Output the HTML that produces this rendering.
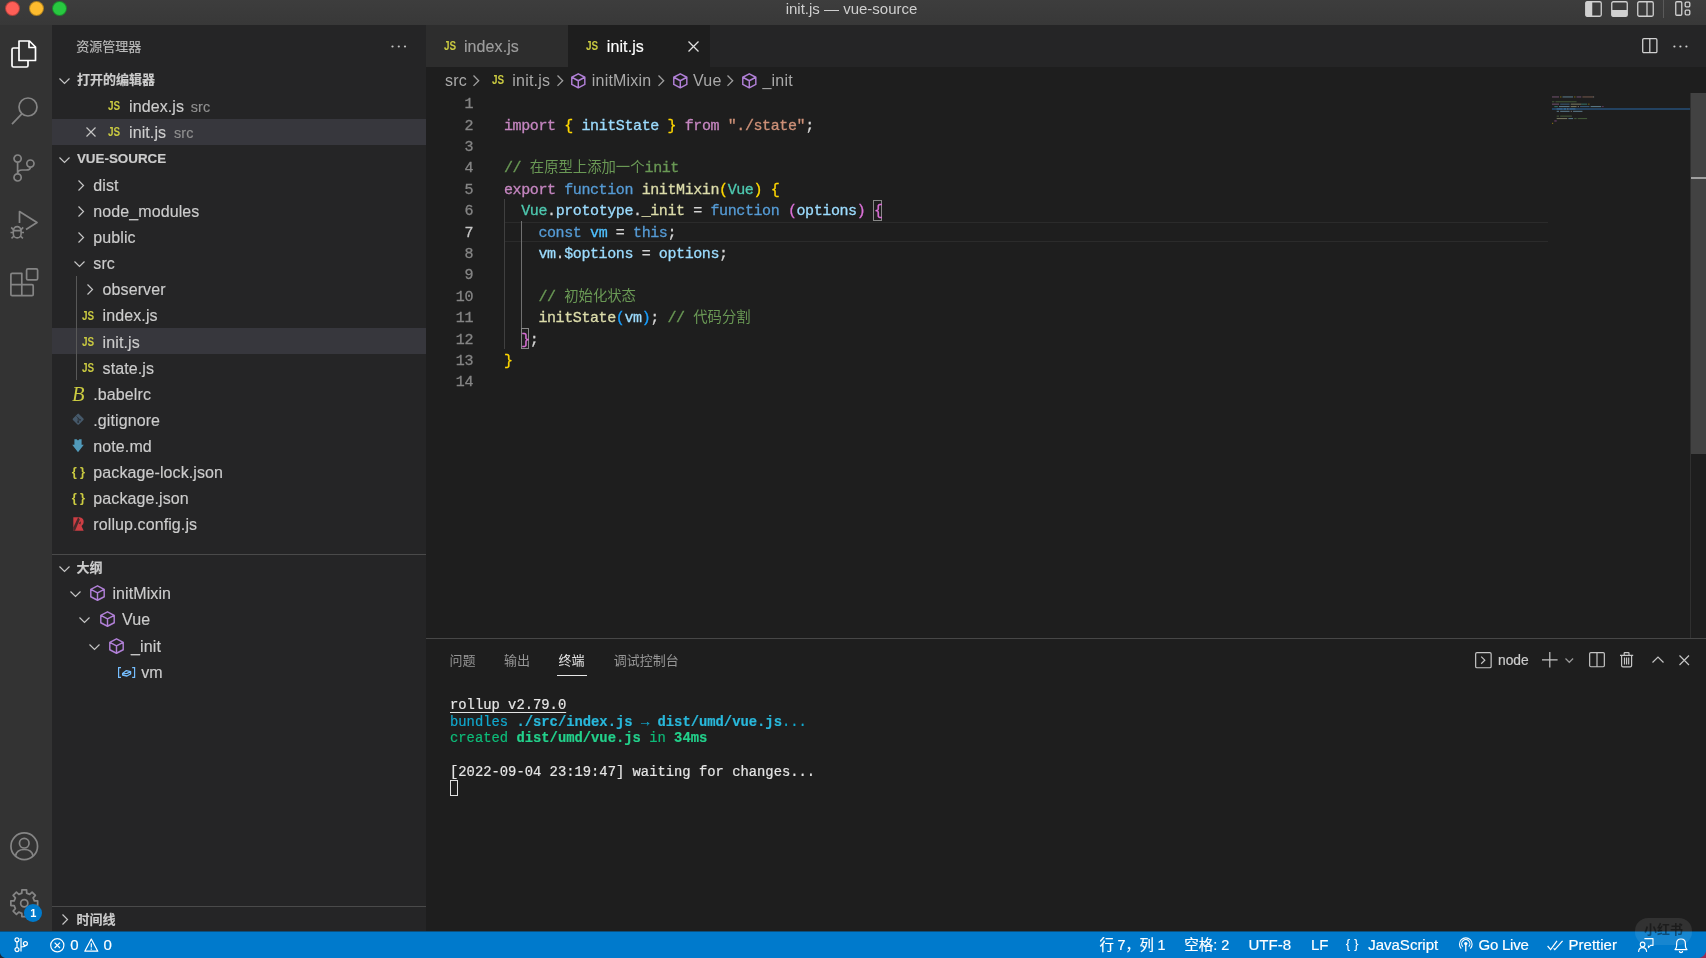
<!DOCTYPE html>
<html lang="zh-CN">
<head>
<meta charset="utf-8">
<title>init.js — vue-source</title>
<style>
*{box-sizing:border-box;margin:0;padding:0}
html,body{width:1706px;height:958px;overflow:hidden;background:#1e1e1e}
body{font-family:"Liberation Sans","Noto Sans CJK SC",sans-serif;color:#cccccc;font-size:16px;position:relative}
div,span{position:absolute;white-space:pre}
svg{position:absolute;overflow:visible}
#titlebar{left:0;top:0;width:1706px;height:25px;background:linear-gradient(#3d3d3d,#383838)}
#title{left:-1.5px;width:1706px;top:-1.2px;height:19px;line-height:19px;text-align:center;font-size:15px;color:#cfcfcf}
.tl{top:1px;width:15px;height:15px;border-radius:50%;border:0.6px solid rgba(0,0,0,0.3)}
#activity{left:0;top:25px;width:52px;height:907px;background:#333333}
#sidebar{left:52px;top:25px;width:374px;height:907px;background:#252526}
#titlebar,#activity,#sidebar,#editor,#status{will-change:transform}
#editor{left:426px;top:25px;width:1280px;height:907px;background:#1e1e1e}
#status{left:0;top:931px;width:1706px;height:27px;border-top:1px solid #0c4f7d;background-clip:border-box;background:#007acc;color:#fff;font-size:15px}
.row{left:0;width:374px;height:26px}
.sel{background:#37373d}
.t{height:26px;line-height:26px;color:#cccccc;font-size:16px;letter-spacing:0.1px;-webkit-text-stroke:0.15px currentColor}
.hdr{font-weight:bold;font-size:13px;color:#cccccc;letter-spacing:0}
.dim{color:#909090;font-size:14.4px}
.js{color:#cbcb41;font-weight:bold;font-size:13.4px;letter-spacing:0;height:26px;line-height:26px;transform:scaleX(0.74);transform-origin:0 50%}
.code{left:0;width:1280px;height:21.4px;line-height:21.4px;font-family:"Liberation Mono","Noto Sans CJK SC",monospace;font-size:15px;letter-spacing:-0.4px;color:#d4d4d4;-webkit-text-stroke:0.3px currentColor}
.code u{text-decoration:none;font-size:14.35px;letter-spacing:0;-webkit-text-stroke:0}
.ln{left:0;width:47px;text-align:right;color:#858585;height:21.4px;line-height:21.4px}
.ct{left:78px;height:21.4px;line-height:21.4px}
.code i,.term i,.term b{font-style:normal;position:static}
.k{color:#c586c0}.b{color:#569cd6}.v{color:#9cdcfe}.f{color:#dcdcaa}.s{color:#ce9178}.c{color:#6a9955}.ty{color:#4ec9b0}
.g{color:#ffd700}.p{color:#da70d6}.bl{color:#179fff}
.term{left:24px;font-family:"Liberation Mono","Noto Sans CJK SC",monospace;font-size:13.83px;line-height:17px;height:17px;color:#cccccc;-webkit-text-stroke:0.2px currentColor}
.st{top:0px;height:26px;line-height:26px;color:#fff;-webkit-text-stroke:0.18px #fff}
.ptab{font-size:13px;height:20px;line-height:20px;color:#969696}
.bc{height:26px;line-height:26px;font-size:16px;color:#a9a9a9;top:43px;letter-spacing:0.2px}
</style>
</head>
<body>
<div id="titlebar">
<div class="tl" style="left:4.7px;background:#fe5f57"></div>
<div class="tl" style="left:28.5px;background:#febc2e"></div>
<div class="tl" style="left:52.1px;background:#28c840"></div>
<div id="title">init.js — vue-source</div>
<svg style="left:1584.5px;top:0.5px" width="17" height="16" viewBox="0 0 17 16"><rect x="0.75" y="0.75" width="15.5" height="14.5" rx="1.5" fill="none" stroke="#d0d0d0" stroke-width="1.3"/><rect x="0.75" y="0.75" width="6.5" height="14.5" fill="#d0d0d0"/></svg>
<svg style="left:1610.6px;top:0.5px" width="17" height="16" viewBox="0 0 17 16"><rect x="0.75" y="0.75" width="15.5" height="14.5" rx="1.5" fill="none" stroke="#d0d0d0" stroke-width="1.3"/><rect x="0.75" y="9" width="15.5" height="6.3" fill="#d0d0d0"/></svg>
<svg style="left:1636.6px;top:0.5px" width="17" height="16" viewBox="0 0 17 16"><rect x="0.75" y="0.75" width="15.5" height="14.5" rx="1.5" fill="none" stroke="#d0d0d0" stroke-width="1.3"/><path d="M10 0.75 V15.25" stroke="#d0d0d0" stroke-width="1.3"/></svg>
<div style="left:1663px;top:0;width:1px;height:18px;background:#5a5a5a"></div>
<svg style="left:1674.7px;top:1px" width="16" height="15" viewBox="0 0 16 15"><rect x="0.75" y="0.75" width="6" height="13.5" rx="1" fill="none" stroke="#d0d0d0" stroke-width="1.3"/><rect x="10.2" y="1.2" width="4.6" height="4.6" rx="1" fill="none" stroke="#d0d0d0" stroke-width="1.3"/><rect x="10.2" y="9.2" width="4.6" height="4.6" rx="1" fill="none" stroke="#d0d0d0" stroke-width="1.3"/></svg>
</div>
<div id="activity">
<svg style="left:10.6px;top:14.6px" width="25.5" height="28" viewBox="0 0 25.5 28"><path d="M8 1 H18.5 L24.5 7 V20.5 H8 Z M18 1 V7.5 H24.5" fill="none" stroke="#ffffff" stroke-width="1.7" stroke-linejoin="round"/><path d="M8 8 H2.5 Q1 8 1 9.5 V25.5 Q1 27 2.5 27 H15.5 Q17 27 17 25.5 V20.5" fill="none" stroke="#ffffff" stroke-width="1.7" stroke-linejoin="round"/></svg>
<svg style="left:11px;top:71.5px" width="27" height="28" viewBox="0 0 27 28"><circle cx="17" cy="10" r="9" fill="none" stroke="#858585" stroke-width="1.7"/><path d="M10.8 16.8 L1 27.2" stroke="#858585" stroke-width="1.7"/></svg>
<svg style="left:12.6px;top:128.8px" width="22" height="28" viewBox="0 0 22 28"><circle cx="4.6" cy="4.6" r="3.6" fill="none" stroke="#858585" stroke-width="1.7"/><circle cx="4.6" cy="23.4" r="3.6" fill="none" stroke="#858585" stroke-width="1.7"/><circle cx="17.4" cy="9.6" r="3.6" fill="none" stroke="#858585" stroke-width="1.7"/><path d="M4.6 8.2 V19.8 M4.6 19.8 Q4.6 16 9 16 H13 Q17.4 16 17.4 13.2" fill="none" stroke="#858585" stroke-width="1.7"/></svg>
<svg style="left:9.6px;top:185px" width="28.5" height="29" viewBox="0 0 28.5 29"><path d="M9.5 13 V1.5 L27 12.5 L16 19.5" fill="none" stroke="#858585" stroke-width="1.7" stroke-linejoin="round"/><path d="M3.6 20.2 a3.6 3.6 0 0 1 7.2 0 M3.3 20.6 H11.1 V24 a3.9 3.9 0 0 1 -7.8 0 Z M3.3 22.5 H0.5 M11.1 22.5 H14 M3.3 19.6 L1.2 17.4 M11.1 19.6 L13.2 17.4 M4 26 L1.5 28.3 M10.4 26 L12.9 28.3" fill="none" stroke="#858585" stroke-width="1.6"/></svg>
<svg style="left:9.6px;top:242.7px" width="28.5" height="28.5" viewBox="0 0 28.5 28.5"><path d="M0.9 6.6 Q0.9 5.4 2.1 5.4 H11.8 V16.7 H22 Q23.2 16.7 23.2 17.9 V26.4 Q23.2 27.6 22 27.6 H2.1 Q0.9 27.6 0.9 26.4 Z M0.9 16.7 H11.8 V27.6" fill="none" stroke="#858585" stroke-width="1.7" stroke-linejoin="round"/><rect x="16.6" y="0.9" width="11" height="11" rx="1.4" fill="none" stroke="#858585" stroke-width="1.7"/></svg>
<svg style="left:9.6px;top:807.2px" width="28.5" height="28.5" viewBox="0 0 28.5 28.5"><circle cx="14.25" cy="14.25" r="13.3" fill="none" stroke="#858585" stroke-width="1.7"/><circle cx="14.25" cy="11.2" r="4.8" fill="none" stroke="#858585" stroke-width="1.7"/><path d="M5.5 24 Q6.5 17.5 14.25 17.5 Q22 17.5 23 24" fill="none" stroke="#858585" stroke-width="1.7"/></svg>
<svg style="left:9.6px;top:863.9px" width="28.5" height="28.5" viewBox="0 0 28.5 28.5"><path d="M27.65 11.91 L27.65 16.59 L24.36 16.68 L23.12 19.68 L25.38 22.07 L22.07 25.38 L19.68 23.12 L16.68 24.36 L16.59 27.65 L11.91 27.65 L11.82 24.36 L8.82 23.12 L6.43 25.38 L3.12 22.07 L5.38 19.68 L4.14 16.68 L0.85 16.59 L0.85 11.91 L4.14 11.82 L5.38 8.82 L3.12 6.43 L6.43 3.12 L8.82 5.38 L11.82 4.14 L11.91 0.85 L16.59 0.85 L16.68 4.14 L19.68 5.38 L22.07 3.12 L25.38 6.43 L23.12 8.82 L24.36 11.82 Z" fill="none" stroke="#858585" stroke-width="1.7" stroke-linejoin="round"/><circle cx="14.25" cy="14.25" r="3.6" fill="none" stroke="#858585" stroke-width="1.7"/></svg>
<div style="left:24.3px;top:878.8px;width:18px;height:18px;border-radius:9px;background:#007acc;color:#fff;font-size:11px;font-weight:bold;line-height:18px;text-align:center">1</div>
</div>
<div id="sidebar">
<span class="t" style="left:24.3px;top:8.7px;height:26px;line-height:26px;font-size:13px;color:#bbbbbb;letter-spacing:0">资源管理器</span>
<svg style="left:339px;top:20px" width="16" height="3" viewBox="0 0 16 3"><circle cx="1.5" cy="1.5" r="1.1" fill="#c5c5c5"/><circle cx="7.8" cy="1.5" r="1.1" fill="#c5c5c5"/><circle cx="14" cy="1.5" r="1.1" fill="#c5c5c5"/></svg>
<svg style="left:6.7px;top:52.8px" width="11" height="6.5" viewBox="0 0 11 6.5"><path d="M0.5 0.5 L5.5 5.5 L10.5 0.5" fill="none" stroke="#c5c5c5" stroke-width="1.2"/></svg>
<span class="t hdr" style="left:24.9px;top:42.4px;height:26px;line-height:26px;">打开的编辑器</span>
<span class="js" style="left:56.0px;top:68.0px">JS</span>
<span class="t" style="left:77.0px;top:68.9px;height:26px;line-height:26px;">index.js</span>
<span class="t dim" style="left:138.8px;top:69.2px;height:26px;line-height:26px;">src</span>
<div class="row sel" style="top:94.3px;height:26.2px"></div>
<svg style="left:33.5px;top:102.3px" width="10" height="10" viewBox="0 0 10 10"><path d="M0.5 0.5 L9.5 9.5 M9.5 0.5 L0.5 9.5" fill="none" stroke="#c5c5c5" stroke-width="1.2"/></svg>
<span class="js" style="left:56.0px;top:94.0px">JS</span>
<span class="t" style="left:77.0px;top:94.9px;height:26px;line-height:26px;">init.js</span>
<span class="t dim" style="left:122.0px;top:95.2px;height:26px;line-height:26px;">src</span>
<svg style="left:6.7px;top:131.7px" width="11" height="6.5" viewBox="0 0 11 6.5"><path d="M0.5 0.5 L5.5 5.5 L10.5 0.5" fill="none" stroke="#c5c5c5" stroke-width="1.2"/></svg>
<span class="t hdr" style="left:24.9px;top:121.2px;height:26px;line-height:26px;font-size:13.4px">VUE-SOURCE</span>
<div class="row sel" style="top:303.2px;height:25.8px"></div>
<div style="left:24.400000000000006px;top:251px;width:1px;height:104px;background:#585858"></div>
<svg style="left:25.8px;top:154.5px" width="6.5" height="11" viewBox="0 0 6.5 11"><path d="M0.5 0.5 L5.5 5.5 L0.5 10.5" fill="none" stroke="#c5c5c5" stroke-width="1.2"/></svg>
<span class="t" style="left:41.3px;top:147.9px;height:26px;line-height:26px;">dist</span>
<svg style="left:25.8px;top:180.5px" width="6.5" height="11" viewBox="0 0 6.5 11"><path d="M0.5 0.5 L5.5 5.5 L0.5 10.5" fill="none" stroke="#c5c5c5" stroke-width="1.2"/></svg>
<span class="t" style="left:41.3px;top:173.9px;height:26px;line-height:26px;">node_modules</span>
<svg style="left:25.8px;top:206.5px" width="6.5" height="11" viewBox="0 0 6.5 11"><path d="M0.5 0.5 L5.5 5.5 L0.5 10.5" fill="none" stroke="#c5c5c5" stroke-width="1.2"/></svg>
<span class="t" style="left:41.3px;top:199.9px;height:26px;line-height:26px;">public</span>
<svg style="left:22.3px;top:236.1px" width="11" height="6.5" viewBox="0 0 11 6.5"><path d="M0.5 0.5 L5.5 5.5 L10.5 0.5" fill="none" stroke="#c5c5c5" stroke-width="1.2"/></svg>
<span class="t" style="left:41.3px;top:226.1px;height:26px;line-height:26px;">src</span>
<svg style="left:35.2px;top:258.9px" width="6.5" height="11" viewBox="0 0 6.5 11"><path d="M0.5 0.5 L5.5 5.5 L0.5 10.5" fill="none" stroke="#c5c5c5" stroke-width="1.2"/></svg>
<span class="t" style="left:50.6px;top:252.3px;height:26px;line-height:26px;">observer</span>
<span class="js" style="left:30.0px;top:277.5px">JS</span>
<span class="t" style="left:50.6px;top:278.4px;height:26px;line-height:26px;">index.js</span>
<span class="js" style="left:30.0px;top:303.6px">JS</span>
<span class="t" style="left:50.6px;top:304.5px;height:26px;line-height:26px;">init.js</span>
<span class="js" style="left:30.0px;top:329.7px">JS</span>
<span class="t" style="left:50.6px;top:330.6px;height:26px;line-height:26px;">state.js</span>
<span style="left:17.299999999999997px;top:355.6px;width:18px;height:26px;line-height:26px;text-align:center;font-family:'Liberation Serif',serif;font-style:italic;font-size:20.5px;color:#cbcb41">B</span>
<span class="t" style="left:41.3px;top:356.7px;height:26px;line-height:26px;">.babelrc</span>
<svg style="left:19.899999999999995px;top:388.3px" width="12.4" height="12.4" viewBox="0 0 12.4 12.4"><rect x="2" y="2" width="8.4" height="8.4" rx="1" transform="rotate(45 6.2 6.2)" fill="#46596a"/><path d="M4.6 3.4 L8 6.8 M6.2 5 V9" stroke="#2a3138" stroke-width="1" fill="none"/><circle cx="6.2" cy="9" r="0.9" fill="#2a3138"/><circle cx="8" cy="6.8" r="0.9" fill="#2a3138"/></svg>
<span class="t" style="left:41.3px;top:382.9px;height:26px;line-height:26px;">.gitignore</span>
<svg style="left:20.200000000000003px;top:413.90000000000003px" width="12" height="13.4" viewBox="0 0 12 13.4"><path d="M2.4 0.3 H4.6 L6 1.4 L7.4 0.3 H9.6 V5.8 H11.8 L6 13.2 L0.2 5.8 H2.4 Z" fill="#519aba"/></svg>
<span class="t" style="left:41.3px;top:408.9px;height:26px;line-height:26px;">note.md</span>
<span style="left:18.1px;top:433.8px;width:20px;height:26px;line-height:26px;text-align:center;font-weight:bold;font-size:13px;color:#cbcb41;letter-spacing:3.2px">{}</span>
<span class="t" style="left:41.3px;top:435.1px;height:26px;line-height:26px;">package-lock.json</span>
<span style="left:18.1px;top:459.90000000000003px;width:20px;height:26px;line-height:26px;text-align:center;font-weight:bold;font-size:13px;color:#cbcb41;letter-spacing:3.2px">{}</span>
<span class="t" style="left:41.3px;top:461.2px;height:26px;line-height:26px;">package.json</span>
<svg style="left:20.799999999999997px;top:492.19999999999993px" width="11" height="14" viewBox="0 0 11 14"><path d="M0.3 0.3 H6.5 Q10.7 0.8 10.7 5 Q10.7 7.5 8.5 9 L10.7 13.7 H0.3 Z" fill="#cc3e44"/><path d="M5.2 0.3 L6.8 2.6 L2 13.7 H0.3 V10.5 Z" fill="#252526" opacity="0.8"/><path d="M5.6 6.2 L8 4.2 L7.4 7.6 Z" fill="#252526" opacity="0.8"/></svg>
<span class="t" style="left:41.3px;top:487.3px;height:26px;line-height:26px;">rollup.config.js</span>
<div style="left:0;top:529.2px;width:374px;height:1px;background:#4a4a4a"></div>
<svg style="left:6.7px;top:540.6px" width="11" height="6.5" viewBox="0 0 11 6.5"><path d="M0.5 0.5 L5.5 5.5 L10.5 0.5" fill="none" stroke="#c5c5c5" stroke-width="1.2"/></svg>
<span class="t hdr" style="left:24.4px;top:530.0px;height:26px;line-height:26px;">大纲</span>
<svg style="left:17.7px;top:566.2px" width="11" height="6.5" viewBox="0 0 11 6.5"><path d="M0.5 0.5 L5.5 5.5 L10.5 0.5" fill="none" stroke="#c5c5c5" stroke-width="1.2"/></svg>
<svg style="left:38.1px;top:560.3px" width="15.0" height="16.1" viewBox="0 0 15 16"><path d="M7.5 0.8 L14.2 4.3 V11.7 L7.5 15.2 L0.8 11.7 V4.3 Z M0.8 4.3 L7.5 7.9 L14.2 4.3 M7.5 7.9 V15.2" fill="none" stroke="#b180d7" stroke-width="1.45" stroke-linejoin="round"/></svg>
<span class="t" style="left:60.4px;top:556.3px;height:26px;line-height:26px;">initMixin</span>
<svg style="left:27.1px;top:592.2px" width="11" height="6.5" viewBox="0 0 11 6.5"><path d="M0.5 0.5 L5.5 5.5 L10.5 0.5" fill="none" stroke="#c5c5c5" stroke-width="1.2"/></svg>
<svg style="left:47.9px;top:586.3px" width="15.0" height="16.1" viewBox="0 0 15 16"><path d="M7.5 0.8 L14.2 4.3 V11.7 L7.5 15.2 L0.8 11.7 V4.3 Z M0.8 4.3 L7.5 7.9 L14.2 4.3 M7.5 7.9 V15.2" fill="none" stroke="#b180d7" stroke-width="1.45" stroke-linejoin="round"/></svg>
<span class="t" style="left:70.0px;top:582.3px;height:26px;line-height:26px;">Vue</span>
<svg style="left:36.6px;top:618.5px" width="11" height="6.5" viewBox="0 0 11 6.5"><path d="M0.5 0.5 L5.5 5.5 L10.5 0.5" fill="none" stroke="#c5c5c5" stroke-width="1.2"/></svg>
<svg style="left:57.3px;top:612.5px" width="15.0" height="16.1" viewBox="0 0 15 16"><path d="M7.5 0.8 L14.2 4.3 V11.7 L7.5 15.2 L0.8 11.7 V4.3 Z M0.8 4.3 L7.5 7.9 L14.2 4.3 M7.5 7.9 V15.2" fill="none" stroke="#b180d7" stroke-width="1.45" stroke-linejoin="round"/></svg>
<span class="t" style="left:79.1px;top:608.5px;height:26px;line-height:26px;">_init</span>
<svg style="left:65.7px;top:641.6px" width="17.2" height="11" viewBox="0 0 17.2 11"><path d="M3 0.6 H0.6 V10.4 H3 M14.2 0.6 H16.6 V10.4 H14.2" fill="none" stroke="#75beff" stroke-width="1.2"/><path d="M4.6 6.4 L8.4 3.6 L12.6 4.6 V7 L9 9 L4.6 8 Z M4.8 6.6 L9 6.4 L12.4 4.8" fill="none" stroke="#75beff" stroke-width="1.3" stroke-linejoin="round"/></svg>
<span class="t" style="left:89.2px;top:635.0px;height:26px;line-height:26px;">vm</span>
<div style="left:0;top:880.5px;width:374px;height:1px;background:#4a4a4a"></div>
<svg style="left:10.2px;top:889.1px" width="6.5" height="11" viewBox="0 0 6.5 11"><path d="M0.5 0.5 L5.5 5.5 L0.5 10.5" fill="none" stroke="#c5c5c5" stroke-width="1.2"/></svg>
<span class="t hdr" style="left:24.4px;top:881.9px;height:26px;line-height:26px;">时间线</span>
</div>
<div id="editor">
<div style="left:0;top:0;width:1280px;height:41.6px;background:#252526"></div>
<div style="left:0;top:0;width:142px;height:41.6px;background:#2d2d2d"></div>
<div style="left:142px;top:0;width:141.5px;height:41.6px;background:#1e1e1e"></div>
<span class="js" style="left:17.600000000000023px;top:8.299999999999997px;font-size:13.4px">JS</span>
<span class="t" style="left:37.89999999999998px;top:8.5px;color:#9d9d9d">index.js</span>
<span class="js" style="left:160.20000000000005px;top:8.299999999999997px;font-size:13.4px">JS</span>
<span class="t" style="left:180.79999999999995px;top:8.5px;color:#ffffff">init.js</span>
<svg style="left:261.5px;top:15.7px" width="11" height="11" viewBox="0 0 11 11"><path d="M0.5 0.5 L10.5 10.5 M10.5 0.5 L0.5 10.5" fill="none" stroke="#e0e0e0" stroke-width="1.3"/></svg>
<svg style="left:1215.6px;top:12.799999999999997px" width="15.6" height="15.4" viewBox="0 0 15.6 15.4"><rect x="0.7" y="0.7" width="14.2" height="14" rx="1.2" fill="none" stroke="#d0d0d0" stroke-width="1.3"/><path d="M7.8 0.7 V14.7" stroke="#d0d0d0" stroke-width="1.3"/></svg>
<svg style="left:1246.6px;top:19.6px" width="15" height="3" viewBox="0 0 15 3"><circle cx="1.4" cy="1.5" r="1.1" fill="#d0d0d0"/><circle cx="7.4" cy="1.5" r="1.1" fill="#d0d0d0"/><circle cx="13.4" cy="1.5" r="1.1" fill="#d0d0d0"/></svg>
<span class="bc" style="left:19.1px">src</span>
<svg style="left:47.0px;top:49.6px" width="6.7" height="11.4" viewBox="0 0 6.7 11.4"><path d="M0.5 0.5 L5.7 5.7 L0.5 10.9" fill="none" stroke="#a0a0a0" stroke-width="1.3"/></svg>
<span class="js" style="left:66px;top:42.3px;font-size:13.4px">JS</span>
<span class="bc" style="left:86.3px">init.js</span>
<svg style="left:130.8px;top:49.6px" width="6.7" height="11.4" viewBox="0 0 6.7 11.4"><path d="M0.5 0.5 L5.7 5.7 L0.5 10.9" fill="none" stroke="#a0a0a0" stroke-width="1.3"/></svg>
<svg style="left:145.4px;top:47.5px" width="14.6" height="15.7" viewBox="0 0 15 16"><path d="M7.5 0.8 L14.2 4.3 V11.7 L7.5 15.2 L0.8 11.7 V4.3 Z M0.8 4.3 L7.5 7.9 L14.2 4.3 M7.5 7.9 V15.2" fill="none" stroke="#b180d7" stroke-width="1.49" stroke-linejoin="round"/></svg>
<span class="bc" style="left:165.8px">initMixin</span>
<svg style="left:232.0px;top:49.6px" width="6.7" height="11.4" viewBox="0 0 6.7 11.4"><path d="M0.5 0.5 L5.7 5.7 L0.5 10.9" fill="none" stroke="#a0a0a0" stroke-width="1.3"/></svg>
<svg style="left:246.5px;top:47.5px" width="14.6" height="15.7" viewBox="0 0 15 16"><path d="M7.5 0.8 L14.2 4.3 V11.7 L7.5 15.2 L0.8 11.7 V4.3 Z M0.8 4.3 L7.5 7.9 L14.2 4.3 M7.5 7.9 V15.2" fill="none" stroke="#b180d7" stroke-width="1.49" stroke-linejoin="round"/></svg>
<span class="bc" style="left:267.1px">Vue</span>
<svg style="left:301.4px;top:49.6px" width="6.7" height="11.4" viewBox="0 0 6.7 11.4"><path d="M0.5 0.5 L5.7 5.7 L0.5 10.9" fill="none" stroke="#a0a0a0" stroke-width="1.3"/></svg>
<svg style="left:315.9px;top:47.5px" width="14.6" height="15.7" viewBox="0 0 15 16"><path d="M7.5 0.8 L14.2 4.3 V11.7 L7.5 15.2 L0.8 11.7 V4.3 Z M0.8 4.3 L7.5 7.9 L14.2 4.3 M7.5 7.9 V15.2" fill="none" stroke="#b180d7" stroke-width="1.49" stroke-linejoin="round"/></svg>
<span class="bc" style="left:336.5px">_init</span>
<div style="left:79px;top:196.6px;width:1043px;height:20.4px;border-top:1px solid #2b2b2b;border-bottom:1px solid #2b2b2b"></div>
<div style="left:77.8px;top:174.4px;width:1px;height:149.7px;background:#404040"></div>
<div style="left:95.1px;top:195.8px;width:1px;height:106.9px;background:#707070"></div>
<div style="left:447.3px;top:174.8px;width:8.4px;height:21.4px;border:1px solid #888888"></div>
<div style="left:94.7px;top:303.1px;width:8.4px;height:21.4px;border:1px solid #888888"></div>
<div class="code" style="top:69.00px"><span class="ln">1</span><span class="ct"></span></div>
<div class="code" style="top:91.00px"><span class="ln">2</span><span class="ct"><i class="k">import</i> <i class="g">{</i> <i class="v">initState</i> <i class="g">}</i> <i class="k">from</i> <i class="s">"./state"</i>;</span></div>
<div class="code" style="top:112.00px"><span class="ln">3</span><span class="ct"></span></div>
<div class="code" style="top:133.00px"><span class="ln">4</span><span class="ct"><i class="c">// <u>在原型上添加一个</u>init</i></span></div>
<div class="code" style="top:155.00px"><span class="ln">5</span><span class="ct"><i class="k">export</i> <i class="b">function</i> <i class="f">initMixin</i><i class="g">(</i><i class="ty">Vue</i><i class="g">)</i> <i class="g">{</i></span></div>
<div class="code" style="top:176.00px"><span class="ln">6</span><span class="ct">  <i class="ty">Vue</i>.<i class="v">prototype</i>.<i class="f">_init</i> = <i class="b">function</i> <i class="p">(</i><i class="v">options</i><i class="p">)</i> <i class="p">{</i></span></div>
<div class="code" style="top:198.00px"><span class="ln" style="color:#c6c6c6">7</span><span class="ct">    <i class="b">const</i> <i class="b" style="color:#4fc1ff">vm</i> = <i class="b">this</i>;</span></div>
<div class="code" style="top:219.00px"><span class="ln">8</span><span class="ct">    <i class="v">vm</i>.<i class="v">$options</i> = <i class="v">options</i>;</span></div>
<div class="code" style="top:240.00px"><span class="ln">9</span><span class="ct"></span></div>
<div class="code" style="top:262.00px"><span class="ln">10</span><span class="ct">    <i class="c">// <u>初始化状态</u></i></span></div>
<div class="code" style="top:283.00px"><span class="ln">11</span><span class="ct">    <i class="f">initState</i><i class="bl">(</i><i class="v">vm</i><i class="bl">)</i>; <i class="c">// <u>代码分割</u></i></span></div>
<div class="code" style="top:305.00px"><span class="ln">12</span><span class="ct">  <i class="p">}</i>;</span></div>
<div class="code" style="top:326.00px"><span class="ln">13</span><span class="ct"><i class="g">}</i></span></div>
<div class="code" style="top:347.00px"><span class="ln">14</span><span class="ct"></span></div>
<div style="left:1126.3px;top:82.5px;width:138px;height:2.2px;background:#264f78;opacity:0.75"></div>
<svg style="left:1126.3px;top:69.3px" width="60" height="34" viewBox="0 0 60 34" opacity="0.45"><rect x="0.00" y="2.40" width="7.02" height="1.1" fill="#c586c0"/><rect x="8.19" y="2.40" width="1.17" height="1.1" fill="#ffd700"/><rect x="10.53" y="2.40" width="10.53" height="1.1" fill="#9cdcfe"/><rect x="22.23" y="2.40" width="1.17" height="1.1" fill="#ffd700"/><rect x="24.57" y="2.40" width="4.68" height="1.1" fill="#c586c0"/><rect x="30.42" y="2.40" width="10.53" height="1.1" fill="#ce9178"/><rect x="40.95" y="2.40" width="1.17" height="1.1" fill="#d4d4d4"/><rect x="0.00" y="7.20" width="2.34" height="1.1" fill="#6a9955"/><rect x="3.51" y="7.20" width="16.38" height="1.1" fill="#6a9955"/><rect x="19.89" y="7.20" width="4.68" height="1.1" fill="#6a9955"/><rect x="0.00" y="9.60" width="7.02" height="1.1" fill="#c586c0"/><rect x="8.19" y="9.60" width="9.36" height="1.1" fill="#569cd6"/><rect x="18.72" y="9.60" width="10.53" height="1.1" fill="#dcdcaa"/><rect x="29.25" y="9.60" width="5.85" height="1.1" fill="#4ec9b0"/><rect x="36.27" y="9.60" width="1.17" height="1.1" fill="#ffd700"/><rect x="2.34" y="12.00" width="3.51" height="1.1" fill="#4ec9b0"/><rect x="7.02" y="12.00" width="10.53" height="1.1" fill="#9cdcfe"/><rect x="18.72" y="12.00" width="5.85" height="1.1" fill="#dcdcaa"/><rect x="25.74" y="12.00" width="1.17" height="1.1" fill="#d4d4d4"/><rect x="28.08" y="12.00" width="9.36" height="1.1" fill="#569cd6"/><rect x="38.61" y="12.00" width="10.53" height="1.1" fill="#9cdcfe"/><rect x="50.31" y="12.00" width="1.17" height="1.1" fill="#da70d6"/><rect x="4.68" y="14.40" width="5.85" height="1.1" fill="#569cd6"/><rect x="11.70" y="14.40" width="2.34" height="1.1" fill="#4fc1ff"/><rect x="15.21" y="14.40" width="1.17" height="1.1" fill="#d4d4d4"/><rect x="17.55" y="14.40" width="5.85" height="1.1" fill="#569cd6"/><rect x="4.68" y="16.80" width="2.34" height="1.1" fill="#9cdcfe"/><rect x="8.19" y="16.80" width="9.36" height="1.1" fill="#9cdcfe"/><rect x="18.72" y="16.80" width="1.17" height="1.1" fill="#d4d4d4"/><rect x="21.06" y="16.80" width="9.36" height="1.1" fill="#9cdcfe"/><rect x="4.68" y="21.60" width="2.34" height="1.1" fill="#6a9955"/><rect x="8.19" y="21.60" width="11.70" height="1.1" fill="#6a9955"/><rect x="4.68" y="24.00" width="10.53" height="1.1" fill="#dcdcaa"/><rect x="16.38" y="24.00" width="4.68" height="1.1" fill="#9cdcfe"/><rect x="22.23" y="24.00" width="2.34" height="1.1" fill="#6a9955"/><rect x="25.74" y="24.00" width="9.36" height="1.1" fill="#6a9955"/><rect x="2.34" y="26.40" width="2.34" height="1.1" fill="#da70d6"/><rect x="0.00" y="28.80" width="1.17" height="1.1" fill="#ffd700"/></svg>
<div style="left:1264px;top:67.6px;width:16px;height:361px;background:#424242"></div>
<div style="left:1264px;top:151.8px;width:16px;height:2.4px;background:#a0a0a0"></div>
<div style="left:1264px;top:67.6px;width:1px;height:545px;background:#303030"></div>
<div style="left:0;top:612.6px;width:1280px;height:1px;background:#474747"></div>
<span class="ptab" style="left:23.4px;top:626.0px;color:#969696">问题</span>
<span class="ptab" style="left:77.9px;top:626.0px;color:#969696">输出</span>
<span class="ptab" style="left:132.4px;top:626.0px;color:#e7e7e7">终端</span>
<span class="ptab" style="left:187.8px;top:626.0px;color:#969696">调试控制台</span>
<div style="left:130.60000000000002px;top:650px;width:30.8px;height:1.2px;background:#e7e7e7"></div>
<svg style="left:1049px;top:626.9px" width="16.8" height="16.4" viewBox="0 0 16.8 16.4"><rect x="0.65" y="0.65" width="15.5" height="15.1" rx="1.3" fill="none" stroke="#c5c5c5" stroke-width="1.2"/><path d="M6.2 4.6 L9.8 8.2 L6.2 11.8" fill="none" stroke="#c5c5c5" stroke-width="1.2"/></svg>
<span style="left:1072px;top:625.9px;height:20px;line-height:20px;font-size:13.8px;color:#cccccc;-webkit-text-stroke:0.2px #ccc">node</span>
<svg style="left:1115.9px;top:627.3px" width="15.6" height="15.6" viewBox="0 0 15.6 15.6"><path d="M7.8 0 V15.6 M0 7.8 H15.6" stroke="#c5c5c5" stroke-width="1.2"/></svg>
<svg style="left:1138.7px;top:633.4px" width="8.6" height="5.3" viewBox="0 0 8.6 5.3"><path d="M0.5 0.5 L4.3 4.3 L8.1 0.5" fill="none" stroke="#9a9a9a" stroke-width="1.2"/></svg>
<svg style="left:1163px;top:627.4px" width="16" height="15.4" viewBox="0 0 16 15.4"><rect x="0.65" y="0.65" width="14.7" height="14.1" rx="1.2" fill="none" stroke="#c5c5c5" stroke-width="1.2"/><path d="M8 0.7 V14.7" stroke="#c5c5c5" stroke-width="1.2"/></svg>
<svg style="left:1194.3px;top:627.1px" width="13.2" height="15.4" viewBox="0 0 13.2 15.4"><path d="M0 3.3 H13.2 M4.2 3 V1.2 Q4.2 0.6 4.8 0.6 H8.4 Q9 0.6 9 1.2 V3 M1.6 3.4 V13.4 Q1.6 14.8 3 14.8 H10.2 Q11.6 14.8 11.6 13.4 V3.4 M4.5 5.6 V12.6 M6.6 5.6 V12.6 M8.7 5.6 V12.6" fill="none" stroke="#c5c5c5" stroke-width="1.2"/></svg>
<svg style="left:1226.2px;top:631.3px" width="12" height="7" viewBox="0 0 12 7"><path d="M0.5 6.5 L6 1 L11.5 6.5" fill="none" stroke="#c5c5c5" stroke-width="1.2"/></svg>
<svg style="left:1253.2px;top:629.9px" width="10.5" height="10.5" viewBox="0 0 10.5 10.5"><path d="M0.5 0.5 L10.0 10.0 M10.0 0.5 L0.5 10.0" fill="none" stroke="#c5c5c5" stroke-width="1.2"/></svg>
<div class="term" style="top:671.9px;color:#e5e5e5"><i style="text-decoration:underline;text-underline-offset:3px">rollup v2.79.0</i></div>
<div class="term" style="top:688.6px;"><i style="color:#11a8cd">bundles </i><b style="color:#29b8db">./src/index.js</b><i style="color:#11a8cd"> → </i><b style="color:#29b8db">dist/umd/vue.js</b><i style="color:#11a8cd">...</i></div>
<div class="term" style="top:705.4px;"><i style="color:#0dbc79">created </i><b style="color:#23d18b">dist/umd/vue.js</b><i style="color:#0dbc79"> in </i><b style="color:#23d18b">34ms</b></div>
<div class="term" style="top:738.5px;color:#e5e5e5">[2022-09-04 23:19:47] waiting for changes...</div>
<div style="left:23.80000000000001px;top:755.4px;width:8.3px;height:15.4px;border:1px solid #e0e0e0"></div>
</div>
<div style="left:1635px;top:918px;width:57px;height:26.5px;border-radius:13px;background:rgba(255,255,255,0.09);color:rgba(0,0,0,0.42);font-size:13px;font-weight:bold;line-height:24.5px;text-align:center;z-index:5">小红书</div>
<svg style="left:1698px;top:950px;z-index:6" width="8" height="8" viewBox="0 0 8 8"><path d="M8 1.5 Q6.5 6.5 1.5 8 H8 Z" fill="#9a2f55"/></svg>
<svg style="left:0;top:952px;z-index:6" width="6" height="6" viewBox="0 0 6 6"><path d="M0 1 Q1 5 5 6 H0 Z" fill="#1a2a3a"/></svg>
<div id="status">
<svg style="left:13.6px;top:5.4px" width="14.4" height="15.4" viewBox="0 0 14.4 15.4"><circle cx="3" cy="2.8" r="2" fill="none" stroke="#fff" stroke-width="1.2"/><circle cx="3" cy="12.6" r="2" fill="none" stroke="#fff" stroke-width="1.2"/><circle cx="11.4" cy="6.6" r="2" fill="none" stroke="#fff" stroke-width="1.2"/><path d="M3 4.8 V10.6 M7 1 V14.4 M7 10 Q11.4 10 11.4 8.6" fill="none" stroke="#fff" stroke-width="1.2"/></svg>
<svg style="left:49.9px;top:5.7px" width="14.6" height="14.6" viewBox="0 0 14.6 14.6"><circle cx="7.3" cy="7.3" r="6.6" fill="none" stroke="#fff" stroke-width="1.2"/><path d="M4.6 4.6 L10 10 M10 4.6 L4.6 10" stroke="#fff" stroke-width="1.2"/></svg>
<span class="st" style="left:70.2px;">0</span>
<svg style="left:83.9px;top:5.7px" width="14.6" height="14" viewBox="0 0 14.6 14"><path d="M7.3 1 L13.8 13.2 H0.8 Z" fill="none" stroke="#fff" stroke-width="1.2" stroke-linejoin="round"/><path d="M7.3 5.2 V9.4 M7.3 10.4 V11.8" stroke="#fff" stroke-width="1.2"/></svg>
<span class="st" style="left:103.6px;">0</span>
<span class="st" style="left:1099.6px;font-size:14.4px;letter-spacing:-0.2px">行 7，列 1</span>
<span class="st" style="left:1184.2px;font-size:14.5px">空格: 2</span>
<span class="st" style="left:1248.5px;">UTF-8</span>
<span class="st" style="left:1311.0px;">LF</span>
<span class="st" style="left:1345.8px;font-size:13.5px;letter-spacing:3.6px;top:-0.8px;-webkit-text-stroke:0">{}</span>
<span class="st" style="left:1368.2px;">JavaScript</span>
<svg style="left:1458.8px;top:6.4px" width="13.6" height="14" viewBox="0 0 13.6 14"><circle cx="6.8" cy="5.6" r="1.7" fill="#fff"/><path d="M6.8 7 V13.6" stroke="#fff" stroke-width="1.3"/><path d="M3.9 8.6 A4.1 4.1 0 1 1 9.7 8.6 M2.3 10.6 A6.3 6.3 0 1 1 11.3 10.6" fill="none" stroke="#fff" stroke-width="1.1"/></svg>
<span class="st" style="left:1478.6px;letter-spacing:-0.25px">Go Live</span>
<svg style="left:1547.3px;top:8.2px" width="16.4" height="10.6" viewBox="0 0 16.4 10.6"><path d="M0.6 6 L3.6 9.6 L10 0.8 M6.6 8.4 L7.8 9.6 L15.6 0.8" fill="none" stroke="#fff" stroke-width="1.2"/></svg>
<span class="st" style="left:1568.6px;">Prettier</span>
<svg style="left:1637.7px;top:6px" width="15.6" height="14.4" viewBox="0 0 15.6 14.4"><path d="M6.4 0.6 H15 V7.4 H12.6 L10.4 9.6 V7.4" fill="none" stroke="#fff" stroke-width="1.1" stroke-linejoin="round"/><circle cx="4.6" cy="6.4" r="2.3" fill="none" stroke="#fff" stroke-width="1.1"/><path d="M0.6 14 Q0.6 9.6 4.6 9.6 Q8.6 9.6 8.6 14" fill="none" stroke="#fff" stroke-width="1.1"/></svg>
<svg style="left:1673.7px;top:5.6px" width="14" height="15.4" viewBox="0 0 14 15.4"><path d="M1 11.6 Q2.6 10 2.6 8 V5.4 Q2.6 1 7 1 Q11.4 1 11.4 5.4 V8 Q11.4 10 13 11.6 Z" fill="none" stroke="#fff" stroke-width="1.2" stroke-linejoin="round"/><path d="M5.4 13 Q5.4 14.6 7 14.6 Q8.6 14.6 8.6 13" fill="none" stroke="#fff" stroke-width="1.2"/></svg>
</div>
</body>
</html>
